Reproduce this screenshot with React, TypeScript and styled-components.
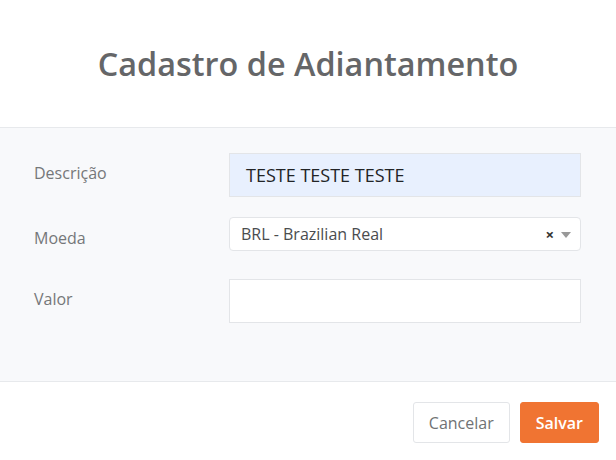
import React from "react";
import styled, { createGlobalStyle } from "styled-components";

const Global = createGlobalStyle`
  html, body { margin: 0; padding: 0; background: #ffffff; }
  body { font-family: "Open Sans", "Noto Sans", sans-serif; }
  * { box-sizing: border-box; }
`;

const Modal = styled.div`
  width: 616px;
  height: 460px;
  display: flex;
  flex-direction: column;
  background: #ffffff;
`;

const Header = styled.header`
  height: 128px;
  flex: none;
  display: flex;
  align-items: center;
  justify-content: center;
  border-bottom: 1px solid #e7e9ec;
`;

const Title = styled.h1`
  margin: 0;
  padding-bottom: 1px;
  font-size: 32.4px;
  font-weight: 600;
  color: #656668;
`;

const Body = styled.div`
  height: 254px;
  flex: none;
  background: #f8f9fb;
  border-bottom: 1px solid #e7e9ec;
  padding: 25px 35px 0 34px;
  display: flex;
  flex-direction: column;
`;

const Row = styled.div<{ $mt?: number }>`
  display: grid;
  grid-template-columns: 195px 352px;
  align-items: center;
  margin-top: ${(p) => p.$mt ?? 0}px;
`;

const Label = styled.label<{ $dy?: number }>`
  font-size: 16px;
  color: #757779;
  position: relative;
  top: ${(p) => p.$dy ?? 0}px;
`;

const TextInput = styled.div<{ $filled?: boolean }>`
  height: 44px;
  border: 1px solid #e3e5e8;
  background: ${(p) => (p.$filled ? "#e8f0fe" : "#ffffff")};
  padding: 0 16px;
  display: flex;
  align-items: center;
  font-size: 18px;
  color: #222426;
`;

const Select = styled.div`
  height: 34px;
  border: 1px solid #e3e5e8;
  border-radius: 4px;
  background: #ffffff;
  padding: 0 9px 0 11px;
  display: flex;
  align-items: center;
  font-size: 16px;
  color: #4a4c4e;
`;

const SelectValue = styled.span`
  flex: 1;
`;

const Clear = styled.span`
  font-size: 15px;
  font-weight: 700;
  color: #333;
  margin-right: 7px;
  line-height: 1;
`;

const Arrow = styled.span`
  width: 0;
  height: 0;
  border-left: 5px solid transparent;
  border-right: 5px solid transparent;
  border-top: 6px solid #999;
  margin-top: 1px;
`;

const Footer = styled.footer`
  flex: 1;
  display: flex;
  justify-content: flex-end;
  align-items: flex-start;
  padding: 20px 17px 0 0;
  gap: 10px;
`;

const Button = styled.button<{ $primary?: boolean }>`
  height: 41px;
  padding: 0 15px;
  border-radius: 3px;
  font-family: "Open Sans", sans-serif;
  font-size: 16px;
  font-weight: ${(p) => (p.$primary ? 600 : 400)};
  border: 1px solid ${(p) => (p.$primary ? "#f07432" : "#e3e5e8")};
  background: ${(p) => (p.$primary ? "#f07432" : "#ffffff")};
  color: ${(p) => (p.$primary ? "#ffffff" : "#707274")};
  cursor: pointer;
`;

export default function App() {
  return (
    <>
      <Global />
      <Modal>
        <Header>
          <Title>Cadastro de Adiantamento</Title>
        </Header>
        <Body>
          <Row>
            <Label $dy={-2}>Descrição</Label>
            <TextInput $filled>TESTE TESTE TESTE</TextInput>
          </Row>
          <Row $mt={20}>
            <Label $dy={4}>Moeda</Label>
            <Select>
              <SelectValue>BRL - Brazilian Real</SelectValue>
              <Clear>×</Clear>
              <Arrow />
            </Select>
          </Row>
          <Row $mt={28}>
            <Label $dy={-2}>Valor</Label>
            <TextInput />
          </Row>
        </Body>
        <Footer>
          <Button>Cancelar</Button>
          <Button $primary>Salvar</Button>
        </Footer>
      </Modal>
    </>
  );
}
